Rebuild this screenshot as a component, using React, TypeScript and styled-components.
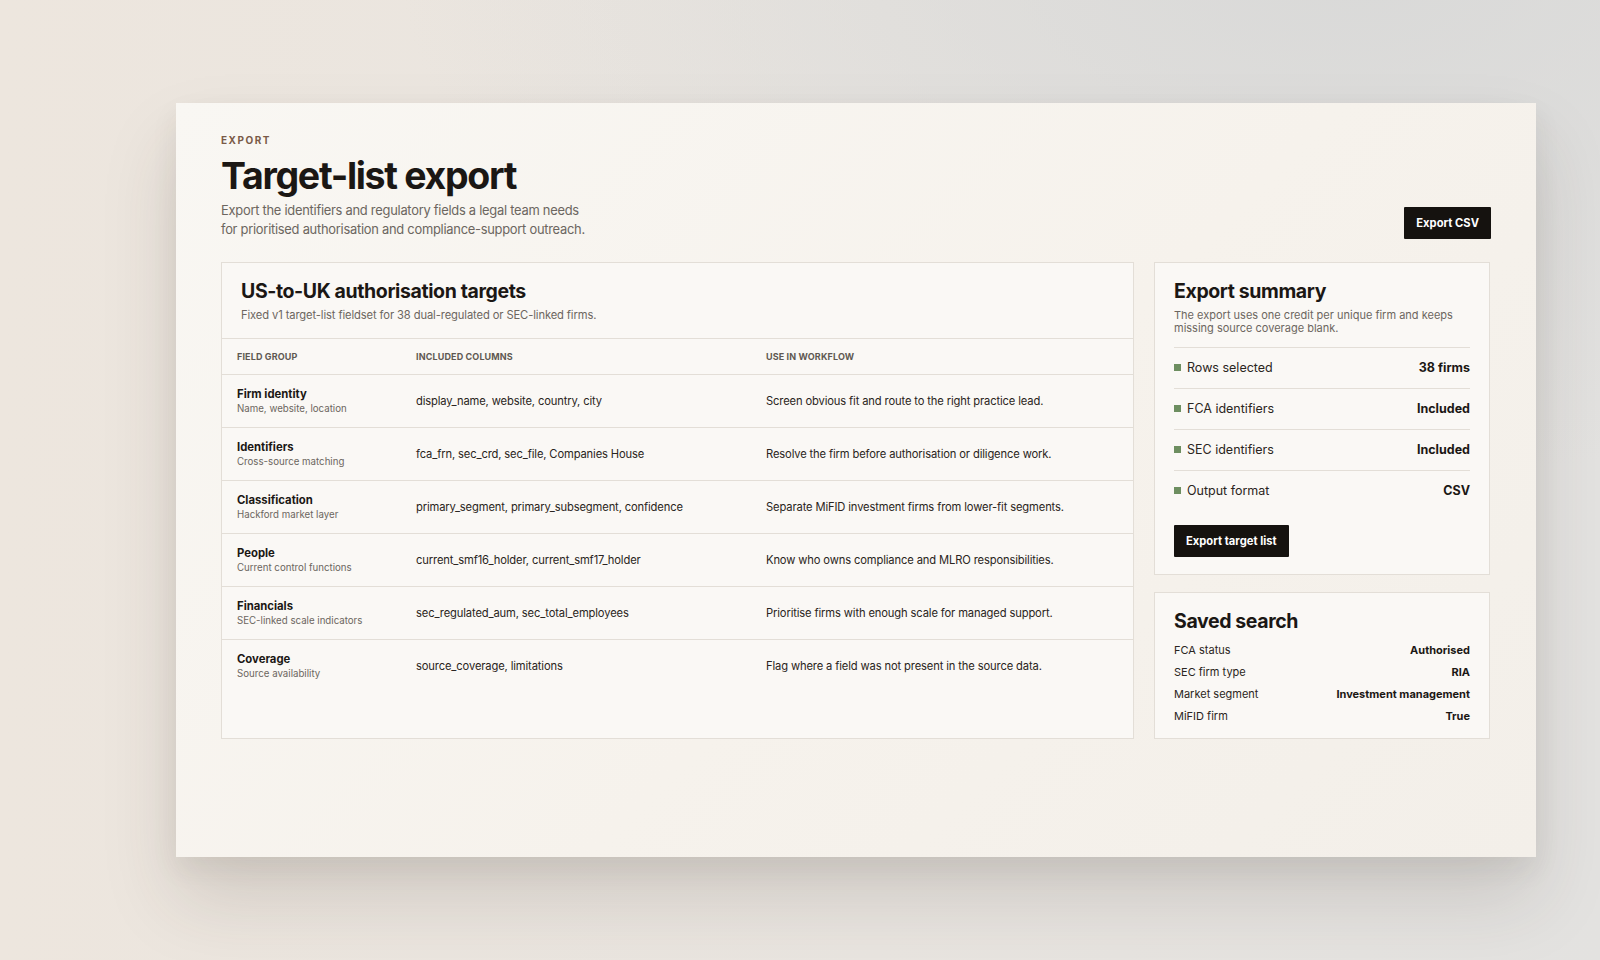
import React from "react";
import styled, { createGlobalStyle } from "styled-components";

const fieldGroups = [
  {
    name: "Firm identity",
    hint: "Name, website, location",
    columns: "display_name, website, country, city",
    use: "Screen obvious fit and route to the right practice lead.",
  },
  {
    name: "Identifiers",
    hint: "Cross-source matching",
    columns: "fca_frn, sec_crd, sec_file, Companies House",
    use: "Resolve the firm before authorisation or diligence work.",
  },
  {
    name: "Classification",
    hint: "Hackford market layer",
    columns: "primary_segment, primary_subsegment, confidence",
    use: "Separate MiFID investment firms from lower-fit segments.",
  },
  {
    name: "People",
    hint: "Current control functions",
    columns: "current_smf16_holder, current_smf17_holder",
    use: "Know who owns compliance and MLRO responsibilities.",
  },
  {
    name: "Financials",
    hint: "SEC-linked scale indicators",
    columns: "sec_regulated_aum, sec_total_employees",
    use: "Prioritise firms with enough scale for managed support.",
  },
  {
    name: "Coverage",
    hint: "Source availability",
    columns: "source_coverage, limitations",
    use: "Flag where a field was not present in the source data.",
  },
];

const summary = [
  { label: "Rows selected", value: "38 firms" },
  { label: "FCA identifiers", value: "Included" },
  { label: "SEC identifiers", value: "Included" },
  { label: "Output format", value: "CSV" },
];

const savedSearch = [
  { label: "FCA status", value: "Authorised" },
  { label: "SEC firm type", value: "RIA" },
  { label: "Market segment", value: "Investment management" },
  { label: "MiFID firm", value: "True" },
];

export default function App() {
  return (
    <>
      <GlobalStyle />
      <Page>
        <Sheet>
          <Header>
            <div>
              <Eyebrow>Export</Eyebrow>
              <Title>Target-list export</Title>
              <Lede>
                Export the identifiers and regulatory fields a legal team needs
                <br />
                for prioritised authorisation and compliance-support outreach.
              </Lede>
            </div>
            <DarkButton>Export CSV</DarkButton>
          </Header>

          <Layout>
            <TablePanel>
              <PanelHead>
                <PanelTitle>US-to-UK authorisation targets</PanelTitle>
                <PanelNote>
                  Fixed v1 target-list fieldset for 38 dual-regulated or
                  SEC-linked firms.
                </PanelNote>
              </PanelHead>
              <HeadRow>
                <HeadCell>Field group</HeadCell>
                <HeadCell>Included columns</HeadCell>
                <HeadCell>Use in workflow</HeadCell>
              </HeadRow>
              {fieldGroups.map((g) => (
                <Row key={g.name}>
                  <Cell>
                    <GroupName>{g.name}</GroupName>
                    <GroupHint>{g.hint}</GroupHint>
                  </Cell>
                  <Cell>{g.columns}</Cell>
                  <Cell>{g.use}</Cell>
                </Row>
              ))}
            </TablePanel>

            <Side>
              <SidePanel>
                <PanelTitle>Export summary</PanelTitle>
                <SideNote>
                  The export uses one credit per unique firm and keeps missing
                  source coverage blank.
                </SideNote>
                <SummaryList>
                  {summary.map((s) => (
                    <SummaryRow key={s.label}>
                      <SummaryLabel>
                        <Dot />
                        {s.label}
                      </SummaryLabel>
                      <SummaryValue>{s.value}</SummaryValue>
                    </SummaryRow>
                  ))}
                </SummaryList>
                <ButtonRow>
                  <DarkButton>Export target list</DarkButton>
                </ButtonRow>
              </SidePanel>

              <SidePanel $grow>
                <PanelTitle>Saved search</PanelTitle>
                <SavedList>
                  {savedSearch.map((s) => (
                    <SavedRow key={s.label}>
                      <span>{s.label}</span>
                      <strong>{s.value}</strong>
                    </SavedRow>
                  ))}
                </SavedList>
              </SidePanel>
            </Side>
          </Layout>
        </Sheet>
      </Page>
    </>
  );
}

const GlobalStyle = createGlobalStyle`
  html, body {
    margin: 0;
    padding: 0;
  }
  body {
    font-family: Inter, "Noto Sans", "Liberation Sans", sans-serif;
    color: #1b1714;
    background:
      radial-gradient(ellipse 950px 520px at 1350px -40px, #d9d9d8 0%, rgba(217,217,216,0) 100%),
      linear-gradient(90deg, #ede6de 0%, #e9e5e0 55%, #e3e2e0 100%);
    min-height: 960px;
  }
`;

const Page = styled.div`
  width: 1600px;
  height: 960px;
  box-sizing: border-box;
  padding: 103px 64px 0 176px;
  overflow: hidden;
`;

const Sheet = styled.div`
  width: 1360px;
  height: 754px;
  box-sizing: border-box;
  padding: 31px 45px 0 45px;
  background: linear-gradient(135deg, #f9f7f3 0%, #f6f2ec 55%, #f3efe9 100%);
  box-shadow:
    0 42px 70px rgba(60, 50, 40, 0.15),
    0 12px 26px rgba(60, 50, 40, 0.07);
`;

const Header = styled.div`
  display: flex;
  justify-content: space-between;
  align-items: flex-end;
`;

const Eyebrow = styled.div`
  font-size: 10px;
  line-height: 12px;
  font-weight: 700;
  letter-spacing: 0.15em;
  text-transform: uppercase;
  color: #7a5a47;
`;

const Title = styled.h1`
  margin: 10px 0 0;
  font-size: 37.5px;
  line-height: 40px;
  font-weight: 700;
  letter-spacing: -0.035em;
  color: #1b1714;
`;

const Lede = styled.p`
  margin: 6px 0 0;
  font-size: 12.9px;
  line-height: 18.5px;
  letter-spacing: -0.02em;
  color: #6c6660;
`;

const DarkButton = styled.button`
  height: 32px;
  padding: 0 12px;
  border: 0;
  border-radius: 1px;
  background: #15120f;
  color: #fff;
  font-family: inherit;
  font-size: 11.2px;
  font-weight: 700;
  cursor: pointer;
`;

const ButtonRow = styled.div`
  display: flex;
`;

const Layout = styled.div`
  display: grid;
  grid-template-columns: 913px 336px;
  gap: 20px;
  margin-top: 23px;
  align-items: stretch;
`;

const Panel = styled.div`
  border: 1px solid #e3ded7;
  background: #faf8f5;
  box-sizing: border-box;
`;

const TablePanel = styled(Panel)`
  display: flex;
  flex-direction: column;
`;

const PanelHead = styled.div`
  padding: 16px 19px 15px;
  border-bottom: 1px solid #e3ded7;
`;

const PanelTitle = styled.h2`
  margin: 0;
  font-size: 19.5px;
  line-height: 24px;
  font-weight: 700;
  letter-spacing: -0.02em;
  color: #1b1714;
`;

const PanelNote = styled.p`
  margin: 4px 0 0;
  font-size: 11.2px;
  line-height: 16px;
  letter-spacing: -0.01em;
  color: #6c6660;
`;

const grid = `
  display: grid;
  grid-template-columns: 179px 350px 1fr;
  align-items: center;
`;

const HeadRow = styled.div`
  ${grid};
  height: 35px;
  border-bottom: 1px solid #e3ded7;
`;

const HeadCell = styled.div`
  padding: 0 15px;
  font-size: 9px;
  font-weight: 700;
  letter-spacing: 0.015em;
  text-transform: uppercase;
  color: #5f5852;
`;

const Row = styled.div`
  ${grid};
  height: 52px;
  border-bottom: 1px solid #e3ded7;

  &:last-child {
    border-bottom: 0;
  }
`;

const Cell = styled.div`
  padding: 0 15px;
  font-size: 11.2px;
  line-height: 15px;
  letter-spacing: -0.012em;
  color: #2a2521;
`;

const GroupName = styled.div`
  font-size: 11.3px;
  line-height: 15px;
  font-weight: 700;
  letter-spacing: 0;
  color: #1b1714;
`;

const GroupHint = styled.div`
  font-size: 9.7px;
  line-height: 13px;
  letter-spacing: 0;
  color: #6c6660;
`;

const Side = styled.div`
  display: flex;
  flex-direction: column;
  gap: 17px;
`;

const SidePanel = styled(Panel)<{ $grow?: boolean }>`
  display: flex;
  flex-direction: column;
  padding: ${(p) => (p.$grow ? "16px 19px 12px" : "16px 19px 17px")};
  flex: ${(p) => (p.$grow ? 1 : "none")};
`;

const SideNote = styled.p`
  margin: 6px 0 0;
  font-size: 11px;
  line-height: 13.3px;
  color: #6c6660;
`;

const SummaryList = styled.div`
  margin: 11px 0 14px;
  border-top: 1px solid #e3ded7;
`;

const SummaryRow = styled.div`
  display: flex;
  justify-content: space-between;
  align-items: center;
  height: 40px;
  border-bottom: 1px solid #e3ded7;
  font-size: 12.5px;

  &:last-child {
    border-bottom: 0;
  }
`;

const SummaryLabel = styled.span`
  display: flex;
  align-items: center;
  gap: 6px;
  color: #2a2521;
`;

const Dot = styled.i`
  width: 7px;
  height: 7px;
  background: #6d8e60;
`;

const SummaryValue = styled.strong`
  font-weight: 700;
  color: #1b1714;
`;

const SavedList = styled.div`
  margin-top: 7px;
  display: flex;
  flex-direction: column;
`;

const SavedRow = styled.div`
  display: flex;
  justify-content: space-between;
  align-items: center;
  height: 21.7px;
  font-size: 11px;
  color: #2a2521;

  strong {
    font-weight: 700;
    color: #1b1714;
  }
`;
